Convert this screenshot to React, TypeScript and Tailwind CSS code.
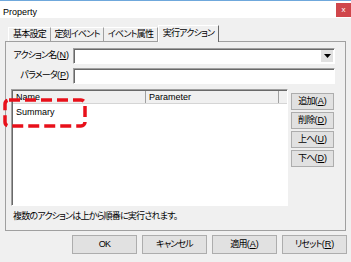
import React from 'react';

const font = "font-['Liberation_Sans','Noto_Sans_CJK_JP',sans-serif] [font-feature-settings:'palt']";
const jp = 'tracking-[-0.8px]';
const sunken = 'border border-t-[#a0a0a0] border-l-[#a0a0a0] border-r-white border-b-white shadow-[inset_1px_1px_0_#696969]';

// mnemonic key, e.g. (N)
function Key({ c }: { c: string }) {
  return (
    <span className="tracking-normal">
      (<span className="underline underline-offset-1">{c}</span>)
    </span>
  );
}

function Tab({ w, label, active }: { w: string; label: string; active?: boolean }) {
  if (active) {
    return (
      <div className={`${w} ${jp} relative z-10 -mb-px h-[17px] bg-[#f0f0f0] border-t border-l border-t-white border-l-white border-r border-r-[#696969] flex items-center justify-center`}>
        {label}
      </div>
    );
  }
  return (
    <div className={`${w} ${jp} h-[14px] border-t border-t-white border-r border-r-[#a0a0a0] flex items-center justify-center`}>
      {label}
    </div>
  );
}

function SideButton({ label, k }: { label: string; k: string }) {
  return (
    <button className={`${jp} w-[43px] h-[17px] bg-[#e1e1e1] border border-[#adadad] text-[9px] leading-none flex items-center justify-center`}>
      {label}<Key c={k} />
    </button>
  );
}

export default function App() {
  return (
    <div className={`${font} w-[351px] h-[262px] bg-[#f0f0f0] text-black text-[9px] overflow-hidden relative border-t border-[#6fa8dc]`}>
      {/* title bar */}
      <div className="h-[17px] bg-white flex items-start justify-between">
        <span className="pl-[3px] pt-[7px] text-[9px] leading-none">Property</span>
        <div className="mt-[2px] w-[15px] h-[14px] bg-[#d0464b] flex items-center justify-center text-white text-[8px] leading-none">x</div>
      </div>

      <div className="px-[5px]">
        {/* tabs */}
        <div className="flex items-end h-[16px] mt-[7px] ml-[3px]">
          <div className="h-[14px] border-l border-l-white" />
          <Tab w="w-[42px]" label="基本設定" />
          <Tab w="w-[53px]" label="定刻イベント" />
          <Tab w="w-[54px]" label="イベント属性" />
          <Tab w="w-[61px]" label="実行アクション" active />
        </div>

        {/* panel */}
        <div className="h-[190px] border border-[#a0a0a0] flex flex-col">
          <div className="flex items-center mt-[6px] gap-[4px]">
            <div className={`${jp} w-[63px] text-right`}>アクション名<Key c="N" /></div>
            <div className={`${sunken} w-[262px] h-[16px] bg-white flex justify-end items-center pr-[1px]`}>
              <div className="w-[12px] h-[12px] bg-[#e1e1e1] flex items-center justify-center">
                <svg width="7" height="4" viewBox="0 0 7 4"><path d="M0 0h7L3.5 4z" fill="#000" /></svg>
              </div>
            </div>
          </div>
          <div className="flex items-center mt-[4px] gap-[4px]">
            <div className={`${jp} w-[63px] text-right`}>パラメータ<Key c="P" /></div>
            <div className={`${sunken} w-[262px] h-[16px] bg-white`} />
          </div>

          <div className="flex mt-[5px] ml-[5px] gap-[3px]">
            <div className={`${sunken} w-[277px] h-[117px] bg-white relative`}>
              <div className="flex h-[13px] bg-[#f0f0f0] border-b border-[#d5d5d5] ml-px mt-px">
                <div className="w-[133px] pl-[3px] border-r border-[#a0a0a0] leading-[12px]">Name</div>
                <div className="w-[133px] pl-[3px] border-r border-[#a0a0a0] leading-[12px]">Parameter</div>
              </div>
              <div className="pl-[4px] pt-[2px] leading-[12px]">Summary</div>
            </div>
            <div className="flex flex-col gap-[2px] pt-[4px]">
              <SideButton label="追加" k="A" />
              <SideButton label="削除" k="D" />
              <SideButton label="上へ" k="U" />
              <SideButton label="下へ" k="D" />
            </div>
          </div>

          <div className={`${jp} mt-[4px] pl-[7px] leading-[12px]`}>複数のアクションは上から順番に実行されます。</div>
        </div>

        {/* bottom buttons */}
        <div className={`${jp} flex justify-end gap-[5px] mt-[4px] -mr-px`}>
          <button className="w-[65px] h-[19px] bg-[#e1e1e1] border border-[#adadad]">OK</button>
          <button className="w-[65px] h-[19px] bg-[#e1e1e1] border border-[#adadad]">キャンセル</button>
          <button className="w-[65px] h-[19px] bg-[#e1e1e1] border border-[#adadad]">適用<Key c="A" /></button>
          <button className="w-[65px] h-[19px] bg-[#e1e1e1] border border-[#adadad]">リセット<Key c="R" /></button>
        </div>
      </div>

      {/* red annotation */}
      <svg className="absolute left-[3px] top-[97px]" width="84" height="30" viewBox="0 0 84 30">
        <rect x="2" y="2" width="80" height="26" rx="4" fill="none" stroke="#e8101a" strokeWidth="3.5" strokeDasharray="11 5" />
      </svg>
    </div>
  );
}
